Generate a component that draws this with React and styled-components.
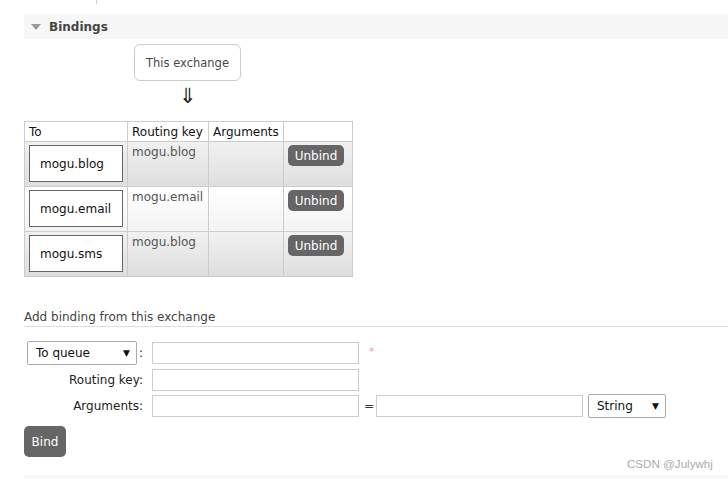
import React from "react";
import styled, { createGlobalStyle } from "styled-components";

const Global = createGlobalStyle`
  html, body { margin: 0; padding: 0; background: #fff; }
  body {
    font-family: "DejaVu Sans", Verdana, sans-serif;
    font-size: 12px;
    color: #333;
    width: 728px;
    height: 479px;
    overflow: hidden;
    position: relative;
  }
`;

const Page = styled.div`
  padding-left: 24px;
  display: flex;
  flex-direction: column;
`;

const TopTick = styled.div`
  width: 1px;
  height: 4px;
  margin-left: 72px;
  background: #ccc;
`;

const SectionHeader = styled.div`
  margin-top: 10px;
  height: 25px;
  background: #f7f7f7;
  display: flex;
  align-items: center;
  padding-left: 7px;
  gap: 8px;
  font-weight: bold;
  color: #444;
`;

const Triangle = styled.span`
  width: 0;
  height: 0;
  border-left: 5px solid transparent;
  border-right: 5px solid transparent;
  border-top: 6px solid #999;
  margin-top: 1px;
`;

const ExchangeCol = styled.div`
  margin-left: 110px;
  margin-top: 5px;
  width: 107px;
  display: flex;
  flex-direction: column;
  align-items: center;
`;

const ExchangeBox = styled.div`
  box-sizing: border-box;
  width: 107px;
  height: 37px;
  border: 1px solid #ccc;
  border-radius: 6px;
  display: flex;
  align-items: center;
  justify-content: center;
  color: #484848;
  font-size: 11.5px;
`;

const Arrow = styled.div`
  font-size: 21px;
  line-height: 20px;
  margin-top: 5px;
  color: #222;
`;

const Table = styled.table`
  margin-top: 15px;
  border-collapse: collapse;
  width: 328px;
  table-layout: fixed;
`;

const Th = styled.th`
  height: 20px;
  width: ${(p) => p.$w}px;
  padding: 0 0 0 4px;
  border: 1px solid #ccc;
  background: #fff;
  font-weight: normal;
  text-align: left;
  color: #111;
  box-sizing: border-box;
`;

const Tr = styled.tr`
  background: ${(p) =>
    p.$alt
      ? "linear-gradient(#ffffff, #f3f3f3)"
      : "linear-gradient(#f1f1f1, #dedede)"};
`;

const Td = styled.td`
  height: 45px;
  border: 1px solid #ccc;
  vertical-align: top;
  padding: ${(p) => p.$pad || "3px 4px"};
  color: #555;
  box-sizing: border-box;
`;

const QueueBox = styled.div`
  box-sizing: border-box;
  width: 94px;
  height: 37px;
  background: #fff;
  border: 1px solid #666;
  display: flex;
  align-items: center;
  padding-left: 10px;
  color: #111;
`;

const SmallButton = styled.button`
  font-family: inherit;
  font-size: 12px;
  font-weight: normal;
  color: #fff;
  background: #666;
  border: none;
  border-radius: 5px;
  width: 56px;
  height: 21px;
  padding: 0;
`;

const FormTitle = styled.div`
  margin-top: 33px;
  padding-bottom: 2px;
  border-bottom: 1px solid #ddd;
  color: #444;
`;

const Form = styled.div`
  margin-top: 14px;
  display: flex;
  flex-direction: column;
  gap: 4px;
`;

const Row = styled.div`
  display: flex;
  align-items: center;
  height: ${(p) => p.$h || 22}px;
`;

const Label = styled.div`
  width: 119px;
  padding-right: 2px;
  display: flex;
  justify-content: flex-end;
  align-items: center;
  color: #222;
`;

const Select = styled.div`
  box-sizing: border-box;
  width: ${(p) => p.$w}px;
  height: 24px;
  border: 1px solid #aaa;
  border-radius: 2px;
  display: flex;
  align-items: center;
  justify-content: space-between;
  padding: 0 6px 0 8px;
  color: #111;
  background: #fff;
  margin-left: ${(p) => p.$ml || 0}px;
`;

const Caret = styled.span`
  font-size: 9px;
  color: #111;
`;

const Colon = styled.span`
  margin-left: 2px;
`;

const Input = styled.div`
  box-sizing: border-box;
  width: 207px;
  height: 22px;
  border: 1px solid #ccc;
  margin-left: ${(p) => p.$ml ?? 7}px;
  background: #fff;
`;

const Star = styled.span`
  margin-left: 10px;
  color: #f99;
  font-size: 11px;
  align-self: flex-start;
  margin-top: 4px;
`;

const Equals = styled.span`
  margin-left: 5px;
  width: 12px;
  color: #333;
`;

const BigButton = styled.button`
  margin-top: 5px;
  font-family: inherit;
  font-size: 12px;
  font-weight: normal;
  color: #fff;
  background: #666;
  border: none;
  border-radius: 5px;
  width: 42px;
  height: 31px;
  padding: 0;
  align-self: flex-start;
`;

const BottomBar = styled.div`
  margin-top: 18px;
  height: 4px;
  background: #f7f7f7;
`;

const Watermark = styled.div`
  position: absolute;
  left: 627px;
  top: 457px;
  font-family: "Liberation Sans", Arial, sans-serif;
  font-size: 11.6px;
  color: #aaa;
`;

const rows = [
  { to: "mogu.blog", key: "mogu.blog" },
  { to: "mogu.email", key: "mogu.email" },
  { to: "mogu.sms", key: "mogu.blog" },
];

export default function App() {
  return (
    <>
      <Global />
      <Page>
        <TopTick />
        <SectionHeader>
          <Triangle />
          <span>Bindings</span>
        </SectionHeader>
        <ExchangeCol>
          <ExchangeBox>This exchange</ExchangeBox>
          <Arrow>⇓</Arrow>
        </ExchangeCol>
        <Table>
          <thead>
            <tr>
              <Th $w={103}>To</Th>
              <Th $w={81}>Routing key</Th>
              <Th $w={75}>Arguments</Th>
              <Th $w={69}></Th>
            </tr>
          </thead>
          <tbody>
            {rows.map((r, i) => (
              <Tr key={i} $alt={i % 2 === 1}>
                <Td $pad="3px 4px">
                  <QueueBox>{r.to}</QueueBox>
                </Td>
                <Td>{r.key}</Td>
                <Td></Td>
                <Td $pad="3px 4px">
                  <SmallButton>Unbind</SmallButton>
                </Td>
              </Tr>
            ))}
          </tbody>
        </Table>
        <FormTitle>Add binding from this exchange</FormTitle>
        <Form>
          <Row $h={24}>
            <Label>
              <Select $w={110}>
                <span>To queue</span>
                <Caret>▼</Caret>
              </Select>
              <Colon>:</Colon>
            </Label>
            <Input />
            <Star>*</Star>
          </Row>
          <Row>
            <Label>Routing key:</Label>
            <Input />
          </Row>
          <Row>
            <Label>Arguments:</Label>
            <Input />
            <Equals>=</Equals>
            <Input $ml={0} />
            <Select $w={78} $ml={5}>
              <span>String</span>
              <Caret>▼</Caret>
            </Select>
          </Row>
          <BigButton>Bind</BigButton>
        </Form>
        <BottomBar />
      </Page>
      <Watermark>CSDN @Julywhj</Watermark>
    </>
  );
}
